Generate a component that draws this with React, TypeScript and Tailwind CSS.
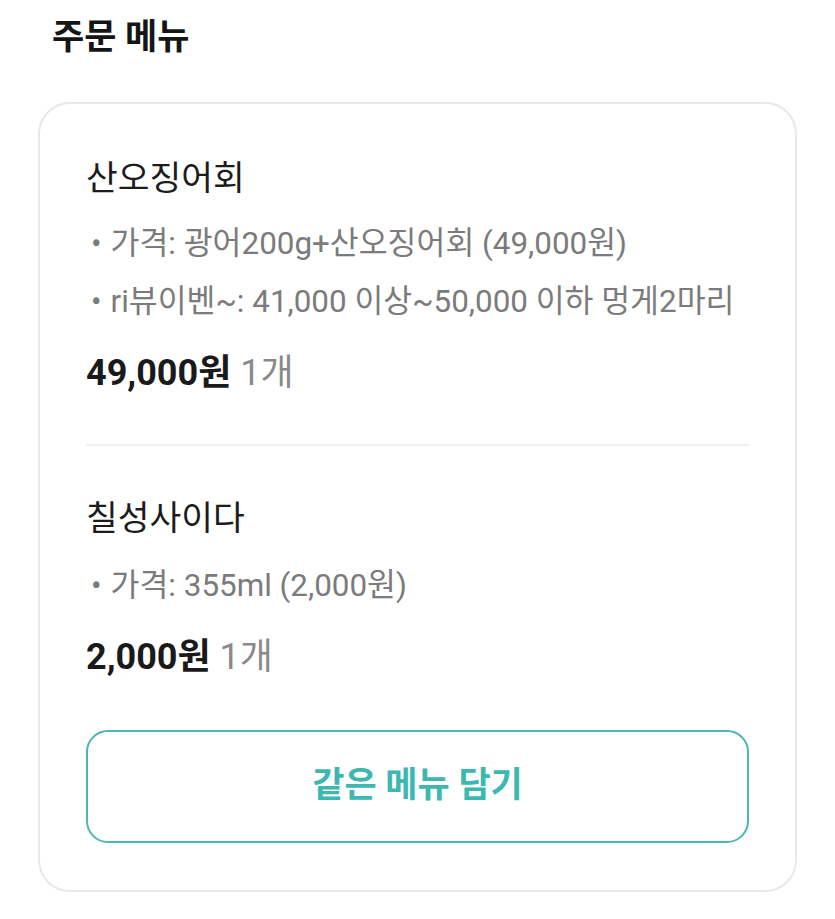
import React from "react";

const font = { fontFamily: '"Roboto", "Noto Sans CJK KR", sans-serif' };

function Item({
  name,
  details,
  price,
  qty,
  bulletGap,
}: {
  name: string;
  details: string[];
  price: string;
  qty: string;
  bulletGap: string;
}) {
  return (
    <div className="flex flex-col">
      <div className="text-[34.5px] leading-[52px] text-[#1c1c1c]">{name}</div>
      <div className={`flex flex-col ${bulletGap}`}>
        {details.map((d) => (
          <div key={d} className="flex items-center text-[31.4px] leading-[58px] text-[#7b7b7b] pl-[5px]">
            <span className="mr-[9px]">•</span>
            <span>{d}</span>
          </div>
        ))}
      </div>
      <div className="mt-[18px] flex items-baseline text-[36px] leading-[48px]">
        <span className="font-bold text-[#1a1a1a]">{price}</span>
        <span className="ml-[9px] text-[#8a8a8a]">{qty}</span>
      </div>
    </div>
  );
}

export default function App() {
  return (
    <div className="min-h-[919px] bg-white px-[38px]" style={font}>
      <div className="flex h-[76px] items-center pl-[14px] text-[35px] font-bold text-[#151515]">
        주문 메뉴
      </div>
      <div className="mt-[26px] rounded-[32px] border-2 border-[#e8e8e8] px-[46px] pt-[48px] pb-[47px]">
        <Item
          name="산오징어회"
          details={["가격: 광어200g+산오징어회 (49,000원)", "ri뷰이벤~: 41,000 이상~50,000 이하 멍게2마리"]}
          price="49,000원"
          qty="1개"
          bulletGap="mt-[11px]"
        />
        <div className="mt-[47px] mb-[46px] h-[2px] bg-[#f0f0f0]" />
        <Item
          name="칠성사이다"
          details={["가격: 355ml (2,000원)"]}
          price="2,000원"
          qty="1개"
          bulletGap="mt-[13px]"
        />
        <button className="mt-[49px] flex h-[113px] w-full items-center justify-center rounded-[22px] border-2 border-[#4cb6b1] bg-white text-[35px] font-bold text-[#3db8b0]">
          같은 메뉴 담기
        </button>
      </div>
    </div>
  );
}
